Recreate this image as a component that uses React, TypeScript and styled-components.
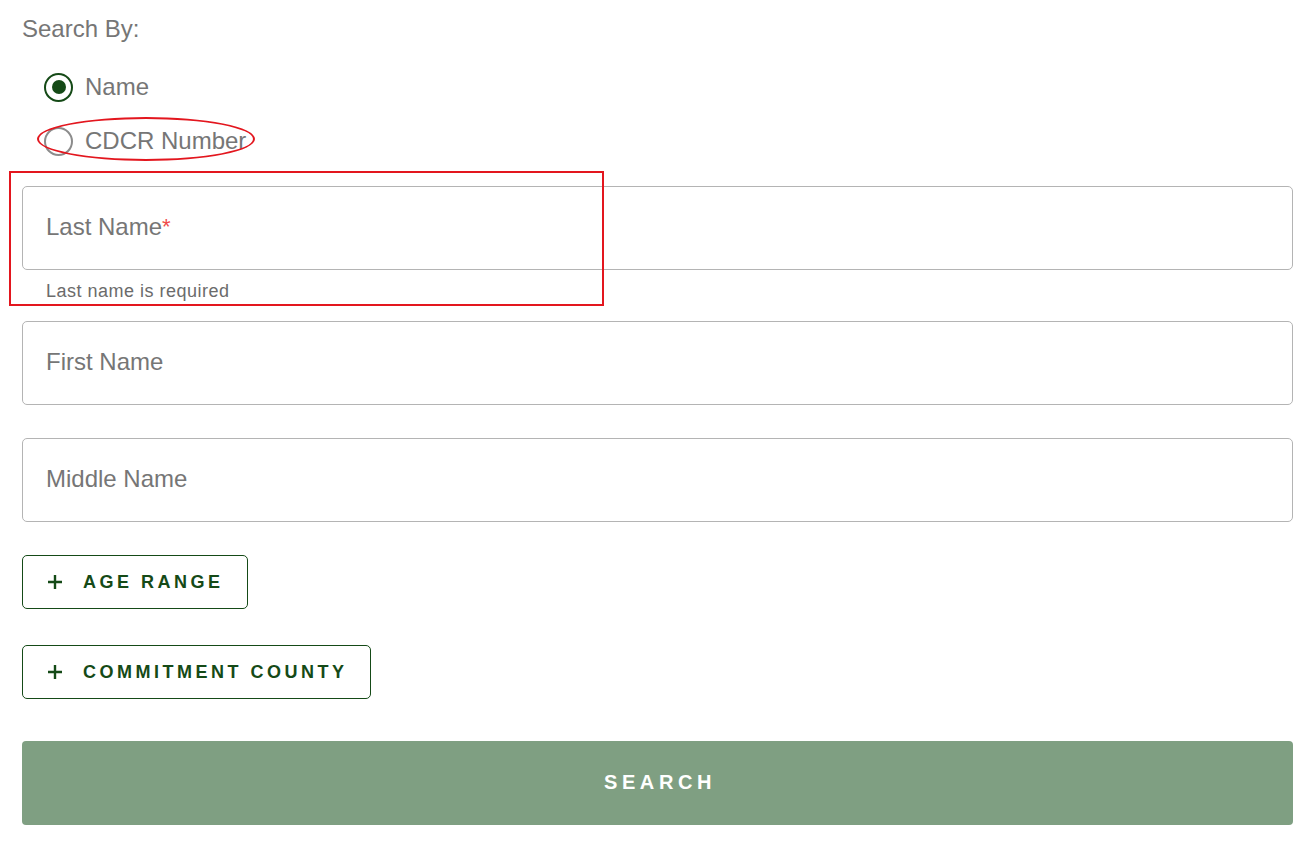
import React from "react";
import styled, { createGlobalStyle } from "styled-components";

const GREEN = "#154a17";
const GRAY_TEXT = "#767676";

const GlobalStyle = createGlobalStyle`
  html, body {
    margin: 0;
    padding: 0;
    background: #ffffff;
    font-family: "Liberation Sans", Arial, sans-serif;
  }
  * { box-sizing: border-box; }
`;

const Page = styled.div`
  position: relative;
  width: 1316px;
  min-height: 859px;
  padding: 16px 23px 0 22px;
  display: flex;
  flex-direction: column;
`;

const Legend = styled.div`
  font-size: 24px;
  line-height: 26px;
  color: ${GRAY_TEXT};
`;

const RadioGroup = styled.div`
  display: flex;
  flex-direction: column;
  margin-top: 18px;
  padding-left: 22px;
`;

const RadioRow = styled.label`
  display: flex;
  align-items: center;
  gap: 12px;
  height: 54px;
  cursor: pointer;
`;

const RadioCircle = styled.span<{ $checked?: boolean }>`
  width: 29px;
  height: 29px;
  border-radius: 50%;
  border: 2.5px solid ${(p) => (p.$checked ? GREEN : "#8c8c8c")};
  display: flex;
  align-items: center;
  justify-content: center;
  &::after {
    content: "";
    display: ${(p) => (p.$checked ? "block" : "none")};
    width: 14px;
    height: 14px;
    border-radius: 50%;
    background: ${GREEN};
  }
`;

const RadioLabel = styled.span`
  font-size: 24px;
  color: ${GRAY_TEXT};
`;

const FieldBox = styled.label<{ $top: number }>`
  display: flex;
  align-items: center;
  height: 84px;
  margin-top: ${(p) => p.$top}px;
  padding: 0 0 3px 23px;
  border: 1px solid #b4b4b4;
  border-radius: 5px;
  font-size: 24px;
  color: ${GRAY_TEXT};
  background: #fff;
`;

const Required = styled.span`
  color: #f04b4b;
  font-size: 22px;
  vertical-align: 1px;
`;

const Helper = styled.div`
  margin-top: 11px;
  padding-left: 24px;
  font-size: 18px;
  line-height: 20px;
  letter-spacing: 0.5px;
  color: #6b6b6b;
`;

const OutlineButton = styled.button<{ $top: number }>`
  align-self: flex-start;
  display: flex;
  align-items: center;
  gap: 20px;
  height: 54px;
  margin-top: ${(p) => p.$top}px;
  padding: 0 23px 0 24px;
  border: 1px solid ${GREEN};
  border-radius: 5px;
  background: #fff;
  color: ${GREEN};
  font-family: "Liberation Sans", Arial, sans-serif;
  font-weight: 700;
  font-size: 18px;
  letter-spacing: 3.5px;
  cursor: pointer;
`;

const PlusIcon = styled.svg`
  width: 16px;
  height: 16px;
  flex: none;
`;

const SearchButton = styled.button`
  height: 84px;
  margin-top: 42px;
  border: none;
  border-radius: 4px;
  background: #7f9f82;
  color: #ffffff;
  font-family: "Liberation Sans", Arial, sans-serif;
  font-weight: 700;
  font-size: 20px;
  letter-spacing: 4.6px;
  padding: 0 0 2px 5px;
  cursor: pointer;
`;

const AnnotationEllipse = styled.div`
  position: absolute;
  left: 37px;
  top: 117px;
  width: 218px;
  height: 44px;
  border: 2px solid #e3161e;
  border-radius: 50%;
  pointer-events: none;
`;

const AnnotationRect = styled.div`
  position: absolute;
  left: 9px;
  top: 171px;
  width: 595px;
  height: 135px;
  border: 2px solid #e3161e;
  pointer-events: none;
`;

const Plus = () => (
  <PlusIcon viewBox="0 0 16 16" aria-hidden="true">
    <path d="M8 1v14M1 8h14" stroke={GREEN} strokeWidth="2.4" fill="none" />
  </PlusIcon>
);

export default function App() {
  return (
    <>
      <GlobalStyle />
      <Page>
        <Legend>Search By:</Legend>
        <RadioGroup>
          <RadioRow>
            <RadioCircle $checked />
            <RadioLabel>Name</RadioLabel>
          </RadioRow>
          <RadioRow>
            <RadioCircle />
            <RadioLabel>CDCR Number</RadioLabel>
          </RadioRow>
        </RadioGroup>
        <FieldBox $top={18}>
          <span>
            Last Name<Required>*</Required>
          </span>
        </FieldBox>
        <Helper>Last name is required</Helper>
        <FieldBox $top={20}>First Name</FieldBox>
        <FieldBox $top={33}>Middle Name</FieldBox>
        <OutlineButton $top={33}>
          <Plus />
          AGE RANGE
        </OutlineButton>
        <OutlineButton $top={36}>
          <Plus />
          COMMITMENT COUNTY
        </OutlineButton>
        <SearchButton>SEARCH</SearchButton>
        <AnnotationEllipse />
        <AnnotationRect />
      </Page>
    </>
  );
}
